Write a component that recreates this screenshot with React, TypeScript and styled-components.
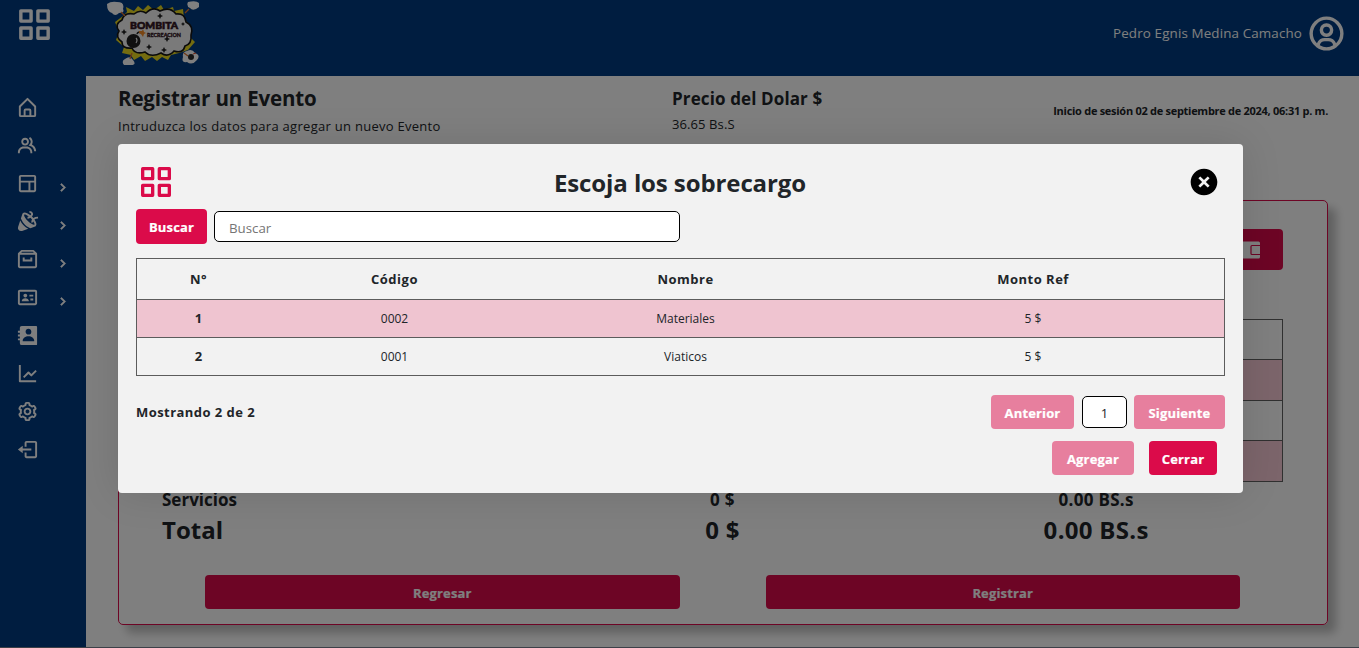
import React from "react";
import styled, { createGlobalStyle } from "styled-components";
import {
  BiGridAlt, BiHomeAlt, BiGroup, BiLayout, BiSolidParty, BiArchive, BiIdCard, BiSolidContact,
  BiLineChart, BiCog, BiLogOut, BiChevronRight, BiUserCircle, BiSolidXCircle,
} from "react-icons/bi";

const crimson = "#db0b4a";
const ink = "#212529";

const GlobalStyle = createGlobalStyle`
  * { box-sizing: border-box; }
  body { margin: 0; overflow: hidden; font-family: "Open Sans", "Noto Sans", sans-serif; color: ${ink}; }
  svg { display: block; flex: none; }
`;

const Page = styled.div`
  position: relative;
  display: flex;
  flex-direction: column;
  height: 648px;
  background: #fff;
  border-bottom: 1px solid #3c4048;
  overflow: hidden;
`;

const TopBar = styled.header`
  display: flex;
  justify-content: space-between;
  align-items: center;
  flex: none;
  height: 76px;
  padding: 0 12px 10px 14px;
  background: #003b80;
  color: #fff;
`;

const Brand = styled.div`
  display: flex;
  gap: 52px;
  align-items: center;
  height: 66px;
  & > svg:first-child { margin-bottom: 18px; }
`;

const Account = styled.div`
  display: flex;
  align-items: center;
  gap: 4px;
  font-size: 13.4px;
  letter-spacing: 0.13px;
`;

const Body = styled.div`
  display: flex;
  flex: 1;
  min-height: 0;
`;

const Sidebar = styled.nav`
  flex: none;
  width: 86px;
  padding-top: 12.5px;
  background: #003b80;
  color: #fff;
`;

const NavItem = styled.div`
  display: flex;
  align-items: center;
  justify-content: space-between;
  height: 38px;
  padding: 0 15px 0 16px;
  & > svg:nth-child(2) {
    margin-top: 7px;
    stroke: currentColor;
    stroke-width: 0.9px;
  }
`;

const Content = styled.main`
  flex: 1;
  padding: 7px 31px 0 32px;
`;

const Heading = styled.div`
  display: grid;
  grid-template-columns: 554px 1fr auto;
  height: 117px;
`;

const Title = styled.h1`
  margin: 0;
  font-size: 20.5px;
  font-weight: 700;
  line-height: 30px;
  letter-spacing: -0.15px;
`;

const Subtitle = styled.p`
  margin: 0;
  font-size: 13px;
  line-height: 26px;
  letter-spacing: 0.28px;
`;

const PriceTitle = styled.h2`
  margin: 0;
  padding-top: 1px;
  font-size: 17px;
  font-weight: 700;
  line-height: 30px;
  letter-spacing: 0.12px;
`;

const Price = styled.p`
  margin: -1px 0 0;
  font-size: 13px;
  line-height: 22px;
  letter-spacing: 0.1px;
`;

const Session = styled.p`
  margin: 18px 0 0;
  font-size: 11px;
  font-weight: 700;
  line-height: 20px;
  letter-spacing: -0.28px;
`;

const Card = styled.section`
  display: flex;
  flex-direction: column;
  height: 425px;
  padding: 28px 44px 15px 43px;
  border: 1px solid ${crimson};
  border-radius: 5px;
  box-shadow: 8px 8px 10px rgba(0, 0, 0, 0.25);
`;

const WalletButton = styled.div`
  display: flex;
  align-items: center;
  align-self: flex-end;
  width: 70px;
  height: 41px;
  padding-left: 24px;
  border-radius: 4px;
  background: ${crimson};
  color: #fff;
`;

const BackTable = styled.div`
  margin-top: 49px;
  border: 1px solid #606060;
`;

const BackRow = styled.div<{ $tinted?: boolean; $h: number }>`
  height: ${(p) => p.$h}px;
  background: ${(p) => (p.$tinted ? "#f8cad6" : "transparent")};
  & + & { border-top: 1px solid #606060; }
`;

const TotalRow = styled.div<{ $size: number; $h: number }>`
  display: grid;
  grid-template-columns: repeat(3, 1fr);
  text-align: center;
  font-size: ${(p) => p.$size}px;
  line-height: ${(p) => p.$h}px;
  height: ${(p) => p.$h - 1}px;
  font-weight: 700;
  & > :first-child { text-align: left; }
  & > :not(:first-child) { letter-spacing: 0.3px; }
`;

const Actions = styled.div`
  display: grid;
  grid-template-columns: 1fr 1fr;
  justify-items: center;
  margin-top: auto;
`;

const Button = styled.button<{ $w: number; $h?: number; $faded?: boolean }>`
  width: ${(p) => p.$w}px;
  height: ${(p) => p.$h ?? 34}px;
  padding: ${(p) => (p.$h ? 0 : 1)}px 0 0;
  border: 0;
  border-radius: 4px;
  background: ${(p) => (p.$faded ? "#e77f9e" : crimson)};
  color: #fff;
  font: 700 13px/34px "Open Sans", sans-serif;
  letter-spacing: 0.15px;
  -webkit-text-stroke: 0.2px #fff;
`;

const Backdrop = styled.div`
  position: absolute;
  inset: 0;
  background: rgba(0, 0, 0, 0.5);
`;

const Dialog = styled.div`
  position: absolute;
  left: 118px;
  top: 144px;
  display: flex;
  flex-direction: column;
  width: 1125px;
  height: 349px;
  padding: 16px 18px 18px;
  border-radius: 4px;
  background: #f2f2f2;
  box-shadow: 0 0 40px rgba(0, 0, 0, 0.12);
`;

const DialogHead = styled.div`
  display: flex;
  align-items: center;
  justify-content: space-between;
  height: 44px;
  padding-right: 5px;
  color: ${crimson};
  & > :last-child { color: #000; }
`;

const DialogTitle = styled.h2`
  margin: 0 4px 0 0;
  color: ${ink};
  font-size: 24px;
  font-weight: 700;
  letter-spacing: -0.1px;
`;

const SearchRow = styled.div`
  display: flex;
  align-items: center;
  gap: 7px;
  margin-top: 5px;
`;

const SearchInput = styled.input`
  width: 466px;
  height: 31px;
  padding: 3px 14px 0;
  border: 1px solid #000;
  border-radius: 5px;
  background: #fff;
  font: 13.3px "Open Sans", sans-serif;
  &::placeholder { color: #757575; }
`;

const Table = styled.div`
  margin-top: 14px;
  border: 1px solid #5c5c5c;
`;

const Row = styled.div<{ $tinted?: boolean; $head?: boolean }>`
  display: grid;
  grid-template-columns: 123px 269px 313px 1fr;
  text-align: center;
  height: ${(p) => (p.$head ? 40 : 38)}px;
  line-height: ${(p) => (p.$head ? 40 : 37)}px;
  font-size: ${(p) => (p.$head ? 13 : 12)}px;
  font-weight: ${(p) => (p.$head ? 700 : 400)};
  letter-spacing: ${(p) => (p.$head ? 0.5 : 0)}px;
  background: ${(p) => (p.$tinted ? "#efc4d0" : "transparent")};
  & + & { border-top: 1px solid #5c5c5c; }
  & > :first-child { font-weight: 700; font-size: 13px; }
`;

const Pager = styled.div`
  display: flex;
  align-items: center;
  height: 34px;
  margin-top: 19px;
`;

const Count = styled.span`
  flex: 1;
  font-size: 13px;
  font-weight: 700;
  letter-spacing: 0.45px;
`;

const PageNumber = styled.span`
  width: 45px;
  height: 32px;
  margin: 0 7px 0 8px;
  border: 1px solid #000;
  border-radius: 5px;
  background: #fff;
  text-align: center;
  font-size: 13px;
  line-height: 32px;
`;

const DialogActions = styled.div`
  display: flex;
  justify-content: flex-end;
  gap: 15px;
  margin-top: 12px;
  padding-right: 8px;
`;

const Logo = () => (
  <svg width="92" height="64" viewBox="0 0 92 64">
    <path fill="#e8d820" d="M16 15 20 11 19 6 27 10 31 5 36 9 41 4 47 9 54 4 57 9 66 6 67 10 76 8 77 18 84 25 83 36 88 41 81 49 72 52 64 54 61 59 55 56 50 60 45 56 38 60 34 55 27 59 24 54 15 52 17 46 9 39 12 31 8 21Z" />
    <g fill="#fff">
      <path d="M0 3Q4 0 10 1 18 1 16 8 18 12 12 12 8 16 5 12 0 11 0 3ZM81 1Q89-1 92 2V6Q86 11 83 7 79 5 81 1ZM80 50Q85 47 88 52 94 54 90 59 85 65 80 61 74 62 76 56 75 51 80 50ZM18 58Q23 54 26 59 30 64 24 64H17Q14 60 18 58Z" />
      <path fill="#f4f4f4" stroke="#151515" strokeWidth="1.6" d="M15 19Q17 11 27 13 33 8 39 12 46 5 53 10 63 5 69 13 78 12 79 21 87 25 84 34 85 43 78 45 76 53 67 50 61 57 54 52 44 57 38 51 28 54 25 47 15 48 15 41 8 36 12 30 7 23 15 19Z" />
    </g>
    <path d="m78 12 4-4M14 11l4 4M25 52l-2 6m54-6 4 3" stroke="#df752d" strokeWidth="1.3" />
    <path fill="#222" d="m53 12 1 2 2 1-2 1-1 2-1-2-2-1 2-1ZM17 28l1 2 2 1-2 1-1 2-1-2-2-1 2-1ZM42 43l1 2 2 1-2 1-1 2-1-2-2-1 2-1ZM60 35l1 2 2 1-2 1-1 2-1-2-2-1 2-1ZM57 46l1 2 2 1-2 1-1 2-1-2-2-1 2-1ZM76 21l.7 1.3 1.3.7-1.3.7-.7 1.3-.7-1.3-1.3-.7 1.3-.7Z" />
    <text x="23" y="28" fontFamily="Lato" fontWeight="900" fontSize="9.6" textLength="48" lengthAdjust="spacingAndGlyphs" fill="#321522" stroke="#321522" strokeWidth=".6">BOMBITA</text>
    <text x="40" y="35.5" fontFamily="Lato" fontWeight="900" fontSize="5.3" textLength="34" lengthAdjust="spacingAndGlyphs" fill="#321522" stroke="#321522" strokeWidth=".3">RECREACION</text>
    <circle cx="26.5" cy="40" r="7" fill="#202020" />
    <path d="M30 33q1-3 4-1" stroke="#222" fill="none" strokeWidth="1.5" />
    <path d="m32 30 3 0 1-2 1 3 2 1-2 1-1 3-2-3-2-1Z" fill="#f58b24" />
    <path d="M29 37q2 2 0 5" fill="none" stroke="#eee" strokeWidth="1.2" />
    <circle cx="84" cy="56" r="3" fill="#292929" /><path d="m86 53 3-1" stroke="#e34f27" />
  </svg>
);

const WalletIcon = () => (
  <svg width="24" height="24" viewBox="0 0 24 24" fill="none">
    <rect x="2" y="3.5" width="21" height="17" rx="1.5" fill="#fff" />
    <path d="M23 7.5h-8a1 1 0 0 0-1 1v7a1 1 0 0 0 1 1h8" stroke={crimson} strokeWidth="1.2" />
  </svg>
);

const nav = [
  { Icon: BiHomeAlt }, { Icon: BiGroup }, { Icon: BiLayout, more: true },
  { Icon: BiSolidParty, more: true }, { Icon: BiArchive, more: true }, { Icon: BiIdCard, more: true },
  { Icon: BiSolidContact }, { Icon: BiLineChart }, { Icon: BiCog }, { Icon: BiLogOut },
];

const rows = [
  ["1", "0002", "Materiales", "5 $"],
  ["2", "0001", "Viaticos", "5 $"],
];

export default function App() {
  return (
    <Page>
      <GlobalStyle />
      <TopBar>
        <Brand><BiGridAlt size={41} /><Logo /></Brand>
        <Account>Pedro Egnis Medina Camacho<BiUserCircle size={41} /></Account>
      </TopBar>
      <Body>
        <Sidebar>
          {nav.map(({ Icon, more }, i) => (
            <NavItem key={i}><Icon size={23} />{more && <BiChevronRight size={17} />}</NavItem>
          ))}
        </Sidebar>
        <Content>
          <Heading>
            <div>
              <Title>Registrar un Evento</Title>
              <Subtitle>Intruduzca los datos para agregar un nuevo Evento</Subtitle>
            </div>
            <div>
              <PriceTitle>Precio del Dolar $</PriceTitle>
              <Price>36.65 Bs.S</Price>
            </div>
            <Session>Inicio de sesión 02 de septiembre de 2024, 06:31 p. m.</Session>
          </Heading>
          <Card>
            <WalletButton><WalletIcon /></WalletButton>
            <BackTable>
              <BackRow $h={39} /><BackRow $tinted $h={41} /><BackRow $h={40} /><BackRow $tinted $h={41} />
            </BackTable>
            <TotalRow $size={17} $h={35}><span>Servicios</span><span>0 $</span><span>0.00 BS.s</span></TotalRow>
            <TotalRow $size={24} $h={28}><span>Total</span><span>0 $</span><span>0.00 BS.s</span></TotalRow>
            <Actions><Button $w={475}>Regresar</Button><Button $w={474}>Registrar</Button></Actions>
          </Card>
        </Content>
      </Body>
      <Backdrop />
      <Dialog>
        <DialogHead>
          <BiGridAlt size={40} />
          <DialogTitle>Escoja los sobrecargo</DialogTitle>
          <BiSolidXCircle size={32} />
        </DialogHead>
        <SearchRow>
          <Button $w={71} $h={35}>Buscar</Button>
          <SearchInput placeholder="Buscar" />
        </SearchRow>
        <Table>
          <Row $head><span>N°</span><span>Código</span><span>Nombre</span><span>Monto Ref</span></Row>
          {rows.map((r, i) => (
            <Row key={r[0]} $tinted={i % 2 === 0}>{r.map((c, j) => <span key={j}>{c}</span>)}</Row>
          ))}
        </Table>
        <Pager>
          <Count>Mostrando 2 de 2</Count>
          <Button $w={83} $faded>Anterior</Button>
          <PageNumber>1</PageNumber>
          <Button $w={91} $faded>Siguiente</Button>
        </Pager>
        <DialogActions>
          <Button $w={82} $faded>Agregar</Button>
          <Button $w={68}>Cerrar</Button>
        </DialogActions>
      </Dialog>
    </Page>
  );
}
